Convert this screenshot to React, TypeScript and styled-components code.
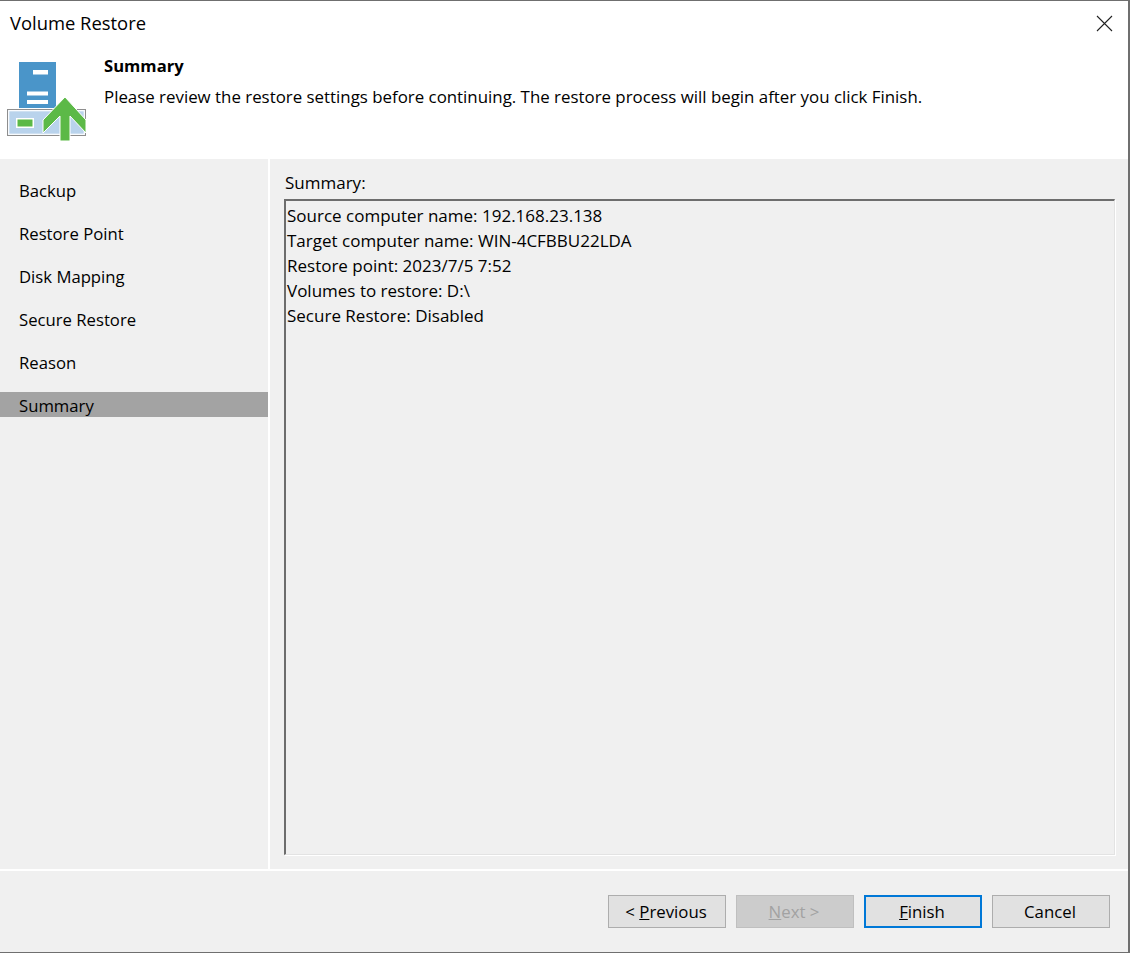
import React from "react";
import styled, { createGlobalStyle } from "styled-components";

const Global = createGlobalStyle`
  html, body {
    margin: 0;
    padding: 0;
    background: #fff;
  }
  body {
    font-family: "Open Sans", "Noto Sans", sans-serif;
    font-size: 17px;
    color: #000;
  }
`;

const Window = styled.div`
  box-sizing: border-box;
  width: 1130px;
  height: 953px;
  border-style: solid;
  border-color: #6f6f6f;
  border-width: 1px 2px 1px 0;
  display: flex;
  flex-direction: column;
  background: #f0f0f0;
`;

const Header = styled.header`
  position: relative;
  height: 158px;
  flex: none;
  background: #fff;
`;

const Title = styled.div`
  font-size: 18.4px;
  line-height: 24px;
  padding: 10px 0 0 10px;
`;

const CloseButton = styled.button`
  position: absolute;
  top: 14px;
  right: 15px;
  width: 17px;
  height: 17px;
  padding: 0;
  border: 0;
  background: none;
  display: flex;
`;

const Banner = styled.div`
  display: flex;
  padding: 27px 0 0 6px;
`;

const BannerIcon = styled.svg`
  width: 80px;
  height: 80px;
  flex: none;
  margin-right: 18px;
`;

const BannerText = styled.div`
  margin-top: -7px;
`;

const BannerTitle = styled.div`
  font-weight: 700;
  font-size: 16.6px;
  line-height: 22px;
`;

const BannerSub = styled.div`
  font-size: 16.87px;
  line-height: 22px;
  margin-top: 9px;
  white-space: nowrap;
`;

const Body = styled.div`
  flex: 1;
  display: flex;
  min-height: 0;
`;

const Sidebar = styled.nav`
  box-sizing: border-box;
  width: 270px;
  flex: none;
  padding-top: 18px;
  display: flex;
  flex-direction: column;
  gap: 18px;
  border-right: 2px solid #fff;
`;

const Step = styled.div<{ $active?: boolean }>`
  height: 25px;
  line-height: 27px;
  font-size: 16.7px;
  padding-left: 19px;
  background: ${(p) => (p.$active ? "#a3a3a3" : "transparent")};
`;

const Main = styled.main`
  flex: 1;
  display: flex;
  flex-direction: column;
  padding: 12px 13px 14px 14px;
  min-width: 0;
`;

const FieldLabel = styled.div`
  line-height: 24px;
  height: 28px;
  padding-left: 1px;
`;

const SummaryBox = styled.div`
  flex: 1;
  box-sizing: border-box;
  border-style: solid;
  border-width: 2px 1px 1px 2px;
  border-color: #6d6d6d #e3e3e3 #e3e3e3 #6d6d6d;
  box-shadow: 1px 1px 0 #fff;
  padding: 2px 1px;
`;

const SummaryLine = styled.div`
  line-height: 25px;
  height: 25px;
  white-space: nowrap;
`;

const Footer = styled.footer`
  flex: none;
  height: 83px;
  box-sizing: border-box;
  border-top: 2px solid #fff;
  display: flex;
  justify-content: flex-end;
  align-items: flex-start;
  gap: 10px;
  padding: 24px 18px 0 0;
`;

const Button = styled.button<{ $primary?: boolean }>`
  box-sizing: border-box;
  width: 118px;
  height: 33px;
  padding: 2px 2px 0 0;
  font: inherit;
  font-size: 16.8px;
  line-height: 1;
  color: ${(p) => (p.disabled ? "#a2a2a2" : "#000")};
  background: ${(p) => (p.disabled ? "#cccccc" : "#e1e1e1")};
  border: ${(p) =>
    p.$primary ? "2px solid #0078d7" : p.disabled ? "1px solid #bfbfbf" : "1px solid #adadad"};
`;

const steps = ["Backup", "Restore Point", "Disk Mapping", "Secure Restore", "Reason", "Summary"];

const summary = [
  "Source computer name: 192.168.23.138",
  "Target computer name: WIN-4CFBBU22LDA",
  "Restore point: 2023/7/5 7:52",
  "Volumes to restore: D:\\",
  "Secure Restore: Disabled",
];

const RestoreIcon = () => (
  <BannerIcon viewBox="0 0 80 80">
    <rect x="13" y="0" width="37" height="46" fill="#4a95c9" />
    <rect x="27" y="8" width="15" height="4.5" fill="#fff" />
    <rect x="21" y="29.5" width="21" height="4" fill="#fff" />
    <rect x="21" y="38" width="21" height="4" fill="#fff" />
    <rect x="1.5" y="47.5" width="78" height="26" fill="#b9d3ec" stroke="#8e8e8e" strokeWidth="1" />
    <rect x="2.7" y="48.7" width="75.6" height="23.6" fill="none" stroke="#fff" strokeWidth="1.2" />
    <rect x="10" y="56" width="18" height="10" fill="#fff" />
    <rect x="11.5" y="57.5" width="15" height="7" fill="#5cb947" />
    <path d="M59 35 L80 58 L80 71 L64 54 L64 79 L54 79 L54 54 L37 71 L37 58 Z" fill="#5cb947" stroke="#fff" strokeWidth="1" />
  </BannerIcon>
);

export default function App() {
  return (
    <>
      <Global />
      <Window>
        <Header>
          <Title>Volume Restore</Title>
          <CloseButton aria-label="Close">
            <svg width="17" height="17" viewBox="0 0 17 17">
              <path d="M1 1 L16 16 M16 1 L1 16" stroke="#222" strokeWidth="1.1" fill="none" />
            </svg>
          </CloseButton>
          <Banner>
            <RestoreIcon />
            <BannerText>
              <BannerTitle>Summary</BannerTitle>
              <BannerSub>
                Please review the restore settings before continuing. The restore process will begin after you click Finish.
              </BannerSub>
            </BannerText>
          </Banner>
        </Header>
        <Body>
          <Sidebar>
            {steps.map((s) => (
              <Step key={s} $active={s === "Summary"}>
                {s}
              </Step>
            ))}
          </Sidebar>
          <Main>
            <FieldLabel>Summary:</FieldLabel>
            <SummaryBox>
              {summary.map((l) => (
                <SummaryLine key={l}>{l}</SummaryLine>
              ))}
            </SummaryBox>
          </Main>
        </Body>
        <Footer>
          <Button>
            &lt; <u>P</u>revious
          </Button>
          <Button disabled>
            <u>N</u>ext &gt;
          </Button>
          <Button $primary>
            <u>F</u>inish
          </Button>
          <Button>Cancel</Button>
        </Footer>
      </Window>
    </>
  );
}
